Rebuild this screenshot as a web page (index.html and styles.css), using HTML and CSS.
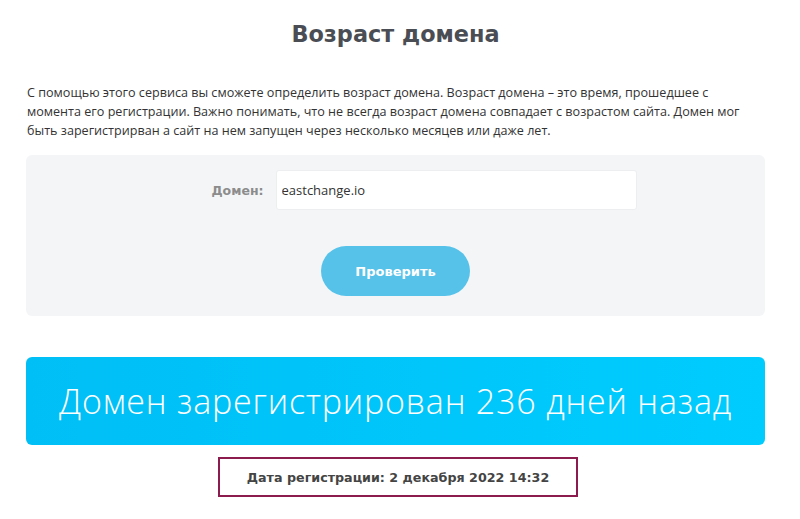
FILE: index.html
```html
<!DOCTYPE html>
<html lang="ru">
<head>
    <meta charset="utf-8">
    <title>Возраст домена</title>
    <link rel="stylesheet" href="styles.css">
</head>
<body>
    <div class="page">
        <h1 class="title">Возраст домена</h1>
        <p class="intro">С помощью этого сервиса вы сможете определить возраст домена. Возраст домена – это время, прошедшее с момента его регистрации. Важно понимать, что не всегда возраст домена совпадает с возрастом сайта. Домен мог быть зарегистрирван а сайт на нем запущен через несколько месяцев или даже лет.</p>

        <form class="check-form">
            <div class="field">
                <label for="domain">Домен:</label>
                <input type="text" id="domain" value="eastchange.io">
            </div>
            <button type="button" class="check-btn">Проверить</button>
        </form>

        <div class="result">Домен зарегистрирован 236 дней назад</div>
        <div class="reg-date">Дата регистрации: 2 декабря 2022 14:32</div>
    </div>
</body>
</html>
```

FILE: styles.css
```css
body {
    margin: 0;
    background: #fff;
    font-family: "Open Sans", "Noto Sans", sans-serif;
    color: #333;
}

.page {
    width: 739px;
    margin-left: 26px;
    padding-top: 17px;
}

.title {
    margin: 0;
    font-family: "DejaVu Sans", sans-serif;
    font-size: 22.4px;
    font-weight: bold;
    color: #4a4e54;
    text-align: center;
    line-height: 34px;
}

.intro {
    margin: 32px 0 0 1px;
    font-size: 12.6px;
    line-height: 19px;
    color: #333;
}

.check-form {
    margin-top: 15px;
    background: #f3f5f7;
    border-radius: 6px;
    height: 161px;
    box-sizing: border-box;
    padding-top: 15px;
    display: flex;
    flex-direction: column;
    align-items: center;
}

.field {
    display: flex;
    align-items: center;
    margin-left: 57px;
}

.field label {
    font-family: "DejaVu Sans", sans-serif;
    font-size: 12.5px;
    font-weight: bold;
    color: #8c8c8c;
    margin-right: 12px;
}

.field input {
    width: 361px;
    height: 40px;
    box-sizing: border-box;
    border: 1px solid #eceef0;
    border-radius: 3px;
    background: #fff;
    padding: 0 5px;
    font-family: "Open Sans", sans-serif;
    font-size: 13px;
    color: #333;
    outline: none;
}

.check-btn {
    margin-top: 36px;
    width: 149px;
    height: 50px;
    border: none;
    border-radius: 25px;
    background: #56c2ea;
    color: #fff;
    font-family: "DejaVu Sans", sans-serif;
    font-size: 13px;
    font-weight: bold;
    cursor: pointer;
}

.result {
    margin-top: 41px;
    height: 88px;
    border-radius: 6px;
    background: linear-gradient(to right, #00bff6, #00ccfe);
    color: #fff;
    font-size: 34px;
    font-weight: 300;
    letter-spacing: 0.8px;
    display: flex;
    align-items: center;
    justify-content: center;
}

.reg-date {
    width: 360px;
    height: 40px;
    box-sizing: border-box;
    margin: 12px 0 0 192px;
    border: 2px solid #8c1c4d;
    display: flex;
    align-items: center;
    justify-content: center;
    font-family: "DejaVu Sans", sans-serif;
    font-size: 12.7px;
    font-weight: bold;
    color: #444;
}
```
